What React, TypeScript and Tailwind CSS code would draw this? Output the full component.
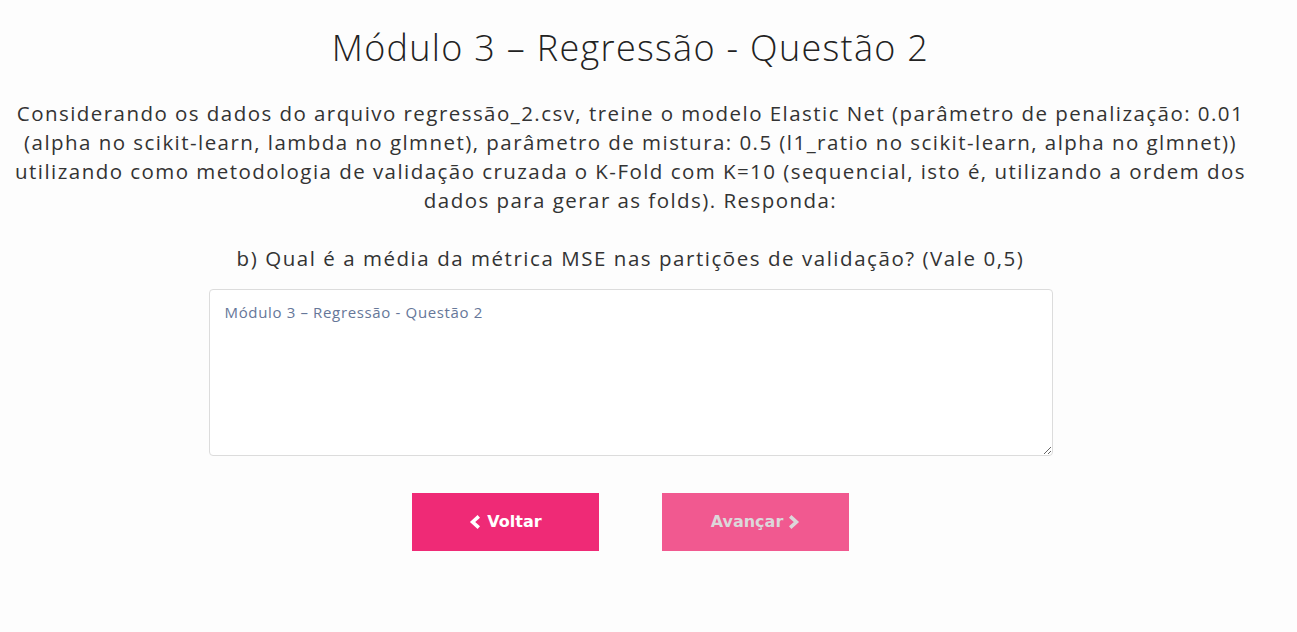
import React from "react";

export default function App() {
  return (
    <div className="min-h-[632px] w-full bg-[#fdfdfd] text-[#333] font-['Open_Sans','Noto_Sans',sans-serif] font-light">
      <div className="flex flex-col items-center pr-[36px]">
        <h1 className="mt-[26px] whitespace-nowrap text-[36px] leading-[44px] text-[#222] tracking-[1.3px]">
          Módulo 3 – Regressão - Questão 2
        </h1>
        <p className="mt-[29px] whitespace-nowrap text-center text-[20.5px] leading-[29px] tracking-[1.45px] font-normal text-[#333]">
          Considerando os dados do arquivo regressão_2.csv, treine o modelo Elastic Net (parâmetro de penalização: 0.01
          <br />
          (alpha no scikit-learn, lambda no glmnet), parâmetro de mistura: 0.5 (l1_ratio no scikit-learn, alpha no glmnet))
          <br />
          utilizando como metodologia de validação cruzada o K-Fold com K=10 (sequencial, isto é, utilizando a ordem dos
          <br />
          dados para gerar as folds). Responda:
        </p>
        <p className="mt-[29px] whitespace-nowrap text-center text-[20.5px] leading-[29px] tracking-[1.54px] font-normal text-[#333]">
          b) Qual é a média da métrica MSE nas partições de validação? (Vale 0,5)
        </p>
        <textarea
          className="mt-[16px] h-[167px] w-[844px] resize-y rounded-[4px] border border-[#dcdcdc] bg-white px-[15px] py-[12px] text-[15px] leading-[20px] tracking-[0.65px] text-[#333] outline-none placeholder:text-[#667799] placeholder:font-normal"
          placeholder="Módulo 3 – Regressão - Questão 2"
        />
        <div className="mt-[37px] flex gap-[63px]">
          <button className="flex h-[58px] w-[187px] items-center justify-center gap-[6px] bg-[#ef2a76] font-['DejaVu_Sans',sans-serif] text-[16px] font-bold text-white">
            <svg className="h-[14px] w-[12px] shrink-0" viewBox="0 0 12 14">
              <path d="M9.8 1.4 L3.6 7 L9.8 12.6" fill="none" stroke="currentColor" strokeWidth="3.6" />
            </svg>
            Voltar
          </button>
          <button className="flex h-[58px] w-[187px] items-center justify-center gap-[5px] bg-[#f15990] font-['DejaVu_Sans',sans-serif] text-[16px] font-bold text-[#dcd7da]">
            Avançar
            <svg className="h-[14px] w-[12px] shrink-0" viewBox="0 0 12 14">
              <path d="M2.2 1.4 L8.4 7 L2.2 12.6" fill="none" stroke="currentColor" strokeWidth="3.6" />
            </svg>
          </button>
        </div>
      </div>
    </div>
  );
}
